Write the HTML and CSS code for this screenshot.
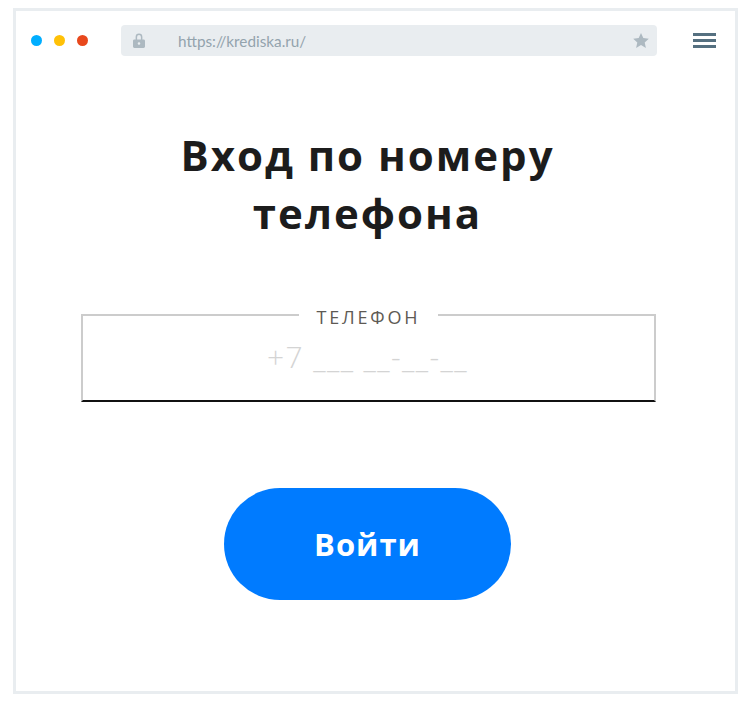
FILE: index.html
```html
<!DOCTYPE html>
<html lang="ru">
<head>
<meta charset="utf-8">
<title>Вход</title>
<link rel="stylesheet" href="styles.css">
</head>
<body>
<main class="frame">
  <header class="toolbar">
    <div class="dots">
      <span class="dot dot-blue"></span>
      <span class="dot dot-yellow"></span>
      <span class="dot dot-red"></span>
    </div>
    <div class="address">
      <svg class="lock" viewBox="0 0 12 15" aria-hidden="true"><path fill-rule="evenodd" d="M2.600 6.500V4a3.400 3.400 0 0 1 6.800 0v2.500h1.200c.8 0 1.400.6 1.400 1.400v5.700c0 .8-.6 1.400-1.400 1.400H1.400C.6 15 0 14.400 0 13.600V7.900c0-.8.6-1.400 1.400-1.400h1.200zm1.500 0h3.800V4a1.900 1.900 0 0 0-3.800 0v2.500zM6 9.200a1.300 1.300 0 1 0 0 2.600 1.300 1.300 0 0 0 0-2.600z"/></svg>
      <span class="url">https://krediska.ru/</span>
      <svg class="star" viewBox="0 0 16 15" aria-hidden="true"><path d="M8 0l2.300 5.100 5.500.6-4.100 3.700 1.200 5.500L8 12.100l-4.900 2.800 1.200-5.500L.2 5.700l5.500-.6z"/></svg>
    </div>
    <div class="menu"><span></span><span></span><span></span></div>
  </header>
  <div class="content">
    <h1 class="title">Вход по номеру<br>телефона</h1>
    <form class="form">
      <fieldset class="field">
        <legend class="legend">Телефон</legend>
        <div class="mask">+7 ___ __-__-__</div>
      </fieldset>
      <button class="submit" type="button">Войти</button>
    </form>
  </div>
</main>
</body>
</html>
```
FILE: styles.css
```css
* { box-sizing: border-box; }
html, body { margin: 0; background: #fff; }
body { padding: 8px 13px 15px; font-family: "Open Sans", sans-serif; }
.frame { width: 725px; height: 686px; border: 3px solid #e9edf0; }
.toolbar { display: flex; align-items: center; height: 31px; margin-top: 14px; padding: 0 21px 0 15px; }
.dots { display: flex; flex: none; gap: 12px; width: 90px; }
.dot { width: 11px; height: 11px; border-radius: 50%; }
.dot-blue { background: #00aeff; }
.dot-yellow { background: #ffc107; }
.dot-red { background: #e8481c; }
.address { display: flex; flex: none; align-items: center; width: 536px; height: 31px; padding: 0 8px 0 12px; background: #e9edf0; border-radius: 4px; }
.lock { width: 12px; height: 15px; fill: #adb9c1; }
.url { flex: 1; margin-left: 33px; font-family: Lato, sans-serif; font-size: 15.300px; color: #93a3ad; }
.star { width: 16px; height: 15px; fill: #adb9c1; }
.menu { display: flex; flex: none; flex-direction: column; gap: 3px; width: 23px; margin-left: 36px; }
.menu span { height: 3px; background: #557080; }
.content { padding-right: 16px; }
.title { margin: 70px 0 0; font-size: 42px; line-height: 58px; font-weight: 700; letter-spacing: 2px; color: #1c1c1c; text-align: center; }
.form { display: flex; flex-direction: column; align-items: center; }
.field { width: 575px; height: 102px; margin: 58px 0 0 2px; padding: 0; border: 2px solid #ccc; border-bottom-color: #111; text-align: center; }
.legend { margin: 0 auto; padding: 5px 18px 1px; font-size: 18px; line-height: 24px; letter-spacing: 2.800px; text-transform: uppercase; color: #5e5a54; }
.mask { font-size: 30px; font-weight: 300; line-height: 40px; letter-spacing: 1.400px; color: #d4d4d4; margin-top: 7px; padding-right: 2px; }
.submit { width: 287px; height: 112px; margin-top: 86px; border: 0; border-radius: 56px; background: #007bff; color: #fff; font-family: "Open Sans", sans-serif; font-size: 31px; font-weight: 700; letter-spacing: 1px; }
```
